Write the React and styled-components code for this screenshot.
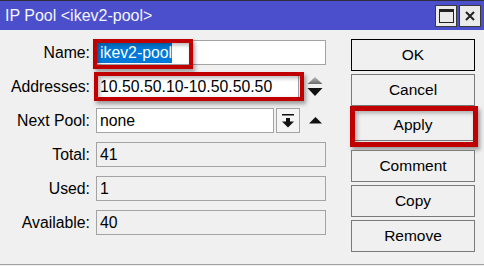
import React from "react";
import styled, { createGlobalStyle } from "styled-components";

const Global = createGlobalStyle`
  html, body {
    margin: 0;
    padding: 0;
    background: #f0f0f0;
  }
  body {
    font-family: "Liberation Sans", Arial, sans-serif;
    font-size: 15.5px;
    color: #000;
  }
`;

const Window = styled.div`
  width: 484px;
  height: 266px;
  display: flex;
  flex-direction: column;
  background: #f0f0f0;
  overflow: hidden;
`;

const TitleBar = styled.div`
  height: 29px;
  border-top: 1px solid #2e2e3a;
  background: #4b4fcb;
  display: flex;
  align-items: center;
  justify-content: space-between;
  padding: 0 3px 0 5px;
  flex: none;
`;

const Title = styled.div`
  color: #f4f4ff;
  font-size: 16px;
  padding-top: 1px;
`;

const TitleButtons = styled.div`
  display: flex;
  gap: 2px;
`;

const TitleButton = styled.div`
  width: 22px;
  height: 22px;
  box-sizing: border-box;
  border: 1px solid #3a3a3a;
  background: #ebebeb;
  display: flex;
  align-items: center;
  justify-content: center;
`;

const Body = styled.div`
  flex: 1;
  display: flex;
  padding-top: 9px;
  border-bottom: 1px solid #a0a0a0;
  margin-bottom: 1px;
`;

const Form = styled.div`
  width: 351px;
  flex: none;
  display: flex;
  flex-direction: column;
  gap: 9px;
  padding-top: 1px;
  font-size: 15.8px;
`;

const Row = styled.div`
  display: flex;
  align-items: center;
  height: 25px;
`;

const Label = styled.div`
  width: 90px;
  text-align: right;
  margin-right: 6px;
  flex: none;
`;

const FieldWrap = styled.div`
  position: relative;
  display: flex;
  align-items: center;
`;

const Field = styled.div`
  width: ${(p) => p.$width}px;
  height: 25px;
  box-sizing: border-box;
  border: 1px solid #a3a3a3;
  background: ${(p) => (p.$readonly ? "#f0f0f0" : "#fff")};
  padding: 0 3px;
  display: flex;
  align-items: center;
  white-space: nowrap;
`;

const Selected = styled.span`
  background: #0078d7;
  color: #fff;
  margin-left: -3px;
  padding-left: 3px;
  line-height: 20px;
`;

const DropButton = styled.div`
  width: 24px;
  height: 25px;
  box-sizing: border-box;
  border: 1px solid #a3a3a3;
  background: #f4f4f4;
  margin-left: 2px;
  display: flex;
  align-items: center;
  justify-content: center;
`;

const SideIcon = styled.div`
  margin-left: ${(p) => p.$gap}px;
  display: flex;
  align-items: center;
`;

const Highlight = styled.span`
  position: absolute;
  left: ${(p) => p.$left}px;
  top: ${(p) => p.$top}px;
  width: ${(p) => p.$w}px;
  height: ${(p) => p.$h}px;
  box-sizing: border-box;
  border: ${(p) => p.$thick}px solid #c00000;
  box-shadow: 2px 3px 4px rgba(0, 0, 0, 0.35),
    inset 2px 2px 4px rgba(0, 0, 0, 0.3);
  pointer-events: none;
`;

const Actions = styled.div`
  width: 124px;
  flex: none;
  display: flex;
  flex-direction: column;
`;

const Button = styled.div`
  position: relative;
  height: 32px;
  box-sizing: border-box;
  border: 1px solid ${(p) => (p.$default ? "#000" : "#7a7a7a")};
  background: #f0f0f0;
  display: flex;
  align-items: center;
  justify-content: center;
  margin-bottom: ${(p) => p.$after ?? 3}px;
`;

const MaxIcon = () => (
  <svg width="15" height="14" viewBox="0 0 15 14">
    <rect x="0.5" y="0.5" width="14" height="13" fill="none" stroke="#222" />
    <rect x="0" y="0" width="15" height="3" fill="#222" />
  </svg>
);

const CloseIcon = () => (
  <svg width="10" height="10" viewBox="0 0 10 10">
    <path d="M1 1 L9 9 M9 1 L1 9" stroke="#222" strokeWidth="2" />
  </svg>
);

const Spinner = () => (
  <svg width="16" height="20" viewBox="0 0 16 20">
    <defs>
      <linearGradient id="up" x1="0" y1="0" x2="0" y2="1">
        <stop offset="0" stopColor="#b8b8b8" />
        <stop offset="1" stopColor="#6a6a6a" />
      </linearGradient>
    </defs>
    <polygon points="8,0 15.5,7 0.5,7" fill="url(#up)" />
    <polygon points="0.5,11 15.5,11 8,19" fill="#111" />
  </svg>
);

const DropIcon = () => (
  <svg width="12" height="14" viewBox="0 0 12 14">
    <rect x="0" y="0" width="12" height="1.5" fill="#111" />
    <rect x="4" y="4" width="4" height="4" fill="#111" />
    <polygon points="0,7.5 12,7.5 6,13.5" fill="#111" />
  </svg>
);

const UpIcon = () => (
  <svg width="13" height="7" viewBox="0 0 13 7">
    <polygon points="6.5,0 13,6.5 0,6.5" fill="#111" />
  </svg>
);

export default function App() {
  return (
    <Window>
      <Global />
      <TitleBar>
        <Title>IP Pool &lt;ikev2-pool&gt;</Title>
        <TitleButtons>
          <TitleButton>
            <MaxIcon />
          </TitleButton>
          <TitleButton>
            <CloseIcon />
          </TitleButton>
        </TitleButtons>
      </TitleBar>
      <Body>
        <Form>
          <Row>
            <Label>Name:</Label>
            <FieldWrap>
              <Field $width={230}>
                <Selected>ikev2-pool</Selected>
              </Field>
              <Highlight $left={-3} $top={-1} $w={100} $h={30} $thick={4} />
            </FieldWrap>
          </Row>
          <Row>
            <Label>Addresses:</Label>
            <FieldWrap>
              <Field $width={203}>10.50.50.10-10.50.50.50</Field>
              <Highlight $left={-2} $top={-2} $w={210} $h={29} $thick={4} />
            </FieldWrap>
            <SideIcon $gap={8}>
              <Spinner />
            </SideIcon>
          </Row>
          <Row>
            <Label>Next Pool:</Label>
            <Field $width={178}>none</Field>
            <DropButton>
              <DropIcon />
            </DropButton>
            <SideIcon $gap={9}>
              <UpIcon />
            </SideIcon>
          </Row>
          <Row>
            <Label>Total:</Label>
            <Field $width={230} $readonly>41</Field>
          </Row>
          <Row>
            <Label>Used:</Label>
            <Field $width={230} $readonly>1</Field>
          </Row>
          <Row>
            <Label>Available:</Label>
            <Field $width={230} $readonly>40</Field>
          </Row>
        </Form>
        <Actions>
          <Button $default>OK</Button>
          <Button>Cancel</Button>
          <Button $after={9}>
            Apply
            <Highlight $left={-2} $top={-4} $w={128} $h={41} $thick={5} />
          </Button>
          <Button>Comment</Button>
          <Button>Copy</Button>
          <Button>Remove</Button>
        </Actions>
      </Body>
    </Window>
  );
}
